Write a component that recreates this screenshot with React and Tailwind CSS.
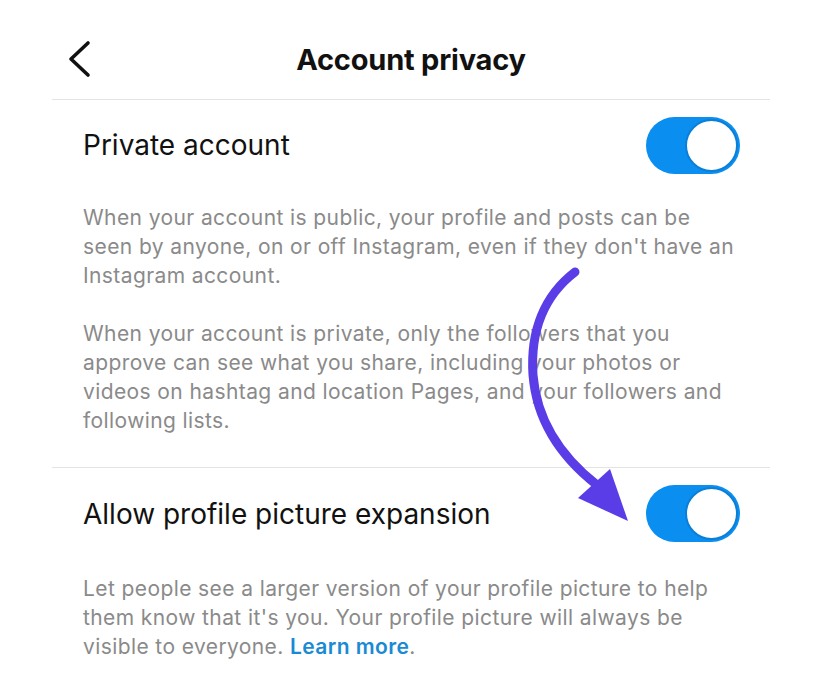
import React from "react";

function Toggle() {
    return (
        <div className="relative w-[94px] h-[57px] rounded-full bg-[#0a8ef0] shrink-0">
            <div className="absolute right-[2px] top-[2px] w-[53px] h-[53px] rounded-full bg-white border-2 border-[#0a7fd8]" />
        </div>
    );
}

export default function App() {
    return (
        <div
            className="relative w-[822px] h-[696px] bg-white overflow-hidden"
            style={{ fontFamily: "Inter, 'Noto Sans', sans-serif" }}
        >
            {/* Header */}
            <div className="relative h-[99px] flex items-center justify-center">
                <svg
                    className="absolute left-[62px] top-[38px]"
                    width="34"
                    height="42"
                    viewBox="0 0 34 42"
                    fill="none"
                    stroke="#111"
                    strokeWidth="3.6"
                    strokeLinecap="round"
                    strokeLinejoin="round"
                >
                    <path d="M26 5 L9 21 L26 37" />
                </svg>
                <h1 className="text-[29px] font-bold text-[#111] tracking-[-0.2px] pt-[20px]">
                    Account privacy
                </h1>
            </div>

            <div className="mx-[52px] border-t border-[#e3e3e3]" />

            {/* Private account */}
            <div className="px-[83px] pr-[82px]">
                <div className="flex items-center justify-between h-[89px] pt-[1px]">
                    <span className="text-[28px] text-[#111]">Private account</span>
                    <Toggle />
                </div>
                <div className="text-[21px] leading-[29px] tracking-[0.4px] text-[#8a8a8a] pt-[14px] whitespace-nowrap">
                    <p>
                        When your account is public, your profile and posts can be
                        <br />
                        seen by anyone, on or off Instagram, even if they don't have an
                        <br />
                        Instagram account.
                    </p>
                    <p className="mt-[29px]">
                        When your account is private, only the followers that you
                        <br />
                        approve can see what you share, including your photos or
                        <br />
                        videos on hashtag and location Pages, and your followers and
                        <br />
                        following lists.
                    </p>
                </div>
            </div>

            <div className="mx-[52px] mt-[32px] border-t border-[#e3e3e3]" />

            {/* Allow profile picture expansion */}
            <div className="px-[83px] pr-[82px]">
                <div className="flex items-center justify-between h-[91px]">
                    <span className="text-[28px] text-[#111]">Allow profile picture expansion</span>
                    <Toggle />
                </div>
                <p className="text-[21px] leading-[29px] tracking-[0.4px] text-[#8a8a8a] pt-[15px] whitespace-nowrap">
                    Let people see a larger version of your profile picture to help
                    <br />
                    them know that it's you. Your profile picture will always be
                    <br />
                    visible to everyone. <span className="text-[#1a8ad4] font-semibold">Learn more</span>.
                </p>
            </div>

            {/* Annotation arrow */}
            <svg
                className="absolute left-0 top-0 pointer-events-none"
                width="822"
                height="696"
                viewBox="0 0 822 696"
                fill="none"
            >
                <path
                    d="M575 272 C 545 295, 530 330, 533 375 C 537 425, 565 460, 597 485"
                    stroke="#5a3de6"
                    strokeWidth="9"
                    strokeLinecap="round"
                />
                <path d="M578 498 L610 469 L628 521 Z" fill="#5a3de6" />
            </svg>
        </div>
    );
}
